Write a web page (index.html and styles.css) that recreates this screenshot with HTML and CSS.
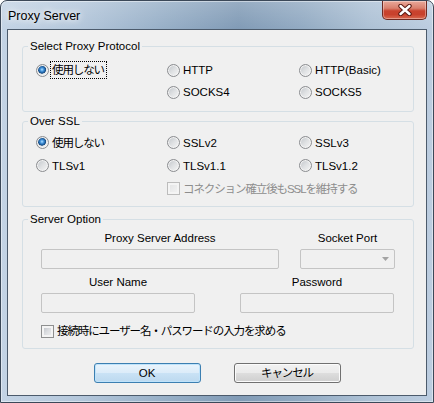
FILE: index.html
```html
<!DOCTYPE html>
<html lang="ja">
<head>
<meta charset="utf-8">
<title>Proxy Server</title>
<link rel="stylesheet" href="styles.css">
</head>
<body>
<div class="window">
  <div class="titlebar">
    <span class="title">Proxy Server</span>
    <button class="close" type="button" aria-label="Close">
      <svg width="14" height="12" viewBox="0 0 14 12">
        <path d="M2.5 2 L11.5 10 M11.5 2 L2.5 10" stroke="#5a1a12" stroke-width="4.4" stroke-linecap="round" fill="none"/>
        <path d="M2.5 2 L11.5 10 M11.5 2 L2.5 10" stroke="#ffffff" stroke-width="2.4" stroke-linecap="round" fill="none"/>
      </svg>
    </button>
  </div>
  <div class="client">
    <fieldset class="group g1">
      <legend>Select Proxy Protocol</legend>
      <div class="opts rows22">
        <label class="opt"><span class="radio checked"></span><span class="focus ja">使用しない</span></label>
        <label class="opt"><span class="radio"></span><span>HTTP</span></label>
        <label class="opt"><span class="radio"></span><span>HTTP(Basic)</span></label>
        <span></span>
        <label class="opt"><span class="radio"></span><span>SOCKS4</span></label>
        <label class="opt"><span class="radio"></span><span>SOCKS5</span></label>
      </div>
    </fieldset>

    <fieldset class="group g2">
      <legend>Over SSL</legend>
      <div class="opts rows23">
        <label class="opt"><span class="radio checked"></span><span class="ja">使用しない</span></label>
        <label class="opt"><span class="radio"></span><span>SSLv2</span></label>
        <label class="opt"><span class="radio"></span><span>SSLv3</span></label>
        <label class="opt"><span class="radio"></span><span>TLSv1</span></label>
        <label class="opt"><span class="radio"></span><span>TLSv1.1</span></label>
        <label class="opt"><span class="radio"></span><span>TLSv1.2</span></label>
        <span></span>
        <label class="opt wide disabled"><span class="check off"></span><span class="ja">コネクション確立後もSSLを維持する</span></label>
      </div>
    </fieldset>

    <fieldset class="group g3">
      <legend>Server Option</legend>
      <div class="server">
        <div class="frow frow1">
          <div class="field w-addr">
            <span class="flabel">Proxy Server Address</span>
            <input class="tbox" type="text" disabled>
          </div>
          <div class="field w-port">
            <span class="flabel">Socket Port</span>
            <div class="combo">
              <svg class="arrow" width="7" height="4" viewBox="0 0 7 4"><path d="M0 0 H7 L3.5 4 Z" fill="#a3a3a3"/></svg>
            </div>
          </div>
        </div>
        <div class="frow frow2">
          <div class="field w-half">
            <span class="flabel">User Name</span>
            <input class="tbox" type="text" disabled>
          </div>
          <div class="field w-half">
            <span class="flabel">Password</span>
            <input class="tbox" type="password" disabled>
          </div>
        </div>
        <label class="opt askrow"><span class="check"></span><span class="ja">接続時にユーザー名・パスワードの入力を求める</span></label>
      </div>
    </fieldset>

    <div class="buttons">
      <button class="btn default" type="button">OK</button>
      <button class="btn ja" type="button">キャンセル</button>
    </div>
  </div>
</div>
</body>
</html>
```

FILE: styles.css
```css
html, body {
  margin: 0;
  padding: 0;
  background: #ffffff;
}

body {
  font-family: "Liberation Sans", "Noto Sans CJK JP", sans-serif;
  font-size: 11.5px;
  color: #000;
}

.ja {
  letter-spacing: -1.1px;
}

.window {
  width: 434px;
  height: 403px;
  box-sizing: border-box;
  border: 1px solid #3b4858;
  border-radius: 7px 7px 0 0;
  padding: 0 6px 6px 6px;
  display: flex;
  flex-direction: column;
  background:
    linear-gradient(180deg, rgba(255,255,255,0.18) 0, rgba(255,255,255,0) 28px),
    linear-gradient(90deg, #c4d4e5 0%, #b4c7db 18%, #97afc7 38%, #819bb6 55%, #93abc3 70%, #adc1d5 85%, #bccde0 100%);
  box-shadow: inset 0 0 0 1px rgba(255,255,255,0.45);
}

.titlebar {
  height: 28px;
  display: flex;
  justify-content: space-between;
  align-items: flex-start;
  padding: 0 0 0 1px;
}

.title {
  margin-top: 7px;
  font-size: 12.5px;
  line-height: 16px;
  color: #000;
  text-shadow: 0 0 6px #fff, 0 0 10px rgba(255,255,255,0.9);
}

.close {
  width: 45px;
  height: 19px;
  margin: 0;
  padding: 0;
  border: 1px solid #6e2a22;
  border-top: none;
  border-radius: 0 0 5px 5px;
  background: linear-gradient(180deg, #e9a99a 0%, #d9806d 40%, #c9432e 55%, #c8412c 75%, #d96a50 100%);
  box-shadow: inset 0 0 0 1px rgba(255,255,255,0.35);
  display: flex;
  align-items: center;
  justify-content: center;
}

.client {
  flex: 1;
  border: 1px solid #4c5b6c;
  background: #f0f0f0;
  padding: 9px 12px 0 14px;
  display: flex;
  flex-direction: column;
}

.group {
  margin: 0;
  padding: 0;
  border: 1px solid #d5dfe5;
  border-radius: 3px;
  min-width: 0;
}

.group legend {
  margin-left: 5px;
  padding: 0 2px;
  line-height: 14px;
  color: #000;
}

.g2 { margin-top: 2px; }
.g3 { margin-top: 5px; }

.opts {
  display: grid;
  grid-template-columns: 131px 132px auto;
  align-items: center;
  padding-left: 13px;
}

.rows22 {
  grid-auto-rows: 22px;
  padding-top: 6px;
  padding-bottom: 8px;
}

.rows23 {
  grid-auto-rows: 23px;
  padding-top: 3px;
  padding-bottom: 6px;
}

.opt {
  display: flex;
  align-items: center;
  gap: 3px;
  line-height: 14px;
  white-space: nowrap;
}

.wide {
  grid-column: span 2;
}

.disabled {
  color: #8d8d8d;
}

.focus {
  outline: 1px dotted #000;
  outline-offset: 0;
  padding: 1px 2px 1px 1px;
  margin-left: -1px;
}

.radio {
  flex: none;
  width: 13px;
  height: 13px;
  box-sizing: border-box;
  border-radius: 50%;
  border: 1px solid #8b8d90;
  background: linear-gradient(135deg, #c0c4c9 0%, #dfe1e3 50%, #f6f6f6 100%);
  box-shadow: inset 0 0 0 1px #f3f3f3;
}

.radio.checked {
  background:
    radial-gradient(circle at 5px 4.6px, #b6e2ff 0, #4a9ae0 1.6px, #1d5d9e 3.2px, #1a4c80 3.8px, rgba(26,76,128,0) 4.3px),
    linear-gradient(135deg, #c0c4c9 0%, #dfe1e3 50%, #f6f6f6 100%);
}

.check {
  flex: none;
  width: 13px;
  height: 13px;
  box-sizing: border-box;
  border: 1px solid #8e8f8f;
  background: linear-gradient(135deg, #b8bcc2 0%, #dcdee1 50%, #f4f4f4 100%);
  box-shadow: inset 0 0 0 2px #f4f4f4;
}

.check.off {
  border-color: #bcbcbc;
  background: linear-gradient(135deg, #e2e3e4 0%, #f4f4f4 100%);
}

.server {
  padding: 5px 0 10px 18px;
  display: flex;
  flex-direction: column;
}

.frow {
  display: flex;
}

.frow1 { gap: 21px; }
.frow2 { gap: 45px; margin-top: 6px; }

.field {
  display: flex;
  flex-direction: column;
  align-items: center;
  gap: 4px;
}

.w-addr { width: 238px; }
.w-port { width: 95px; }
.w-half { width: 154px; }

.flabel {
  line-height: 14px;
}

.tbox {
  display: block;
  width: 100%;
  height: 20px;
  box-sizing: border-box;
  margin: 0;
  padding: 0;
  border: 1px solid #c4c4c4;
  border-radius: 2px;
  background: #f0f0f0;
  font: inherit;
}

.combo {
  width: 100%;
  height: 20px;
  box-sizing: border-box;
  border: 1px solid #c4c4c4;
  border-radius: 2px;
  background: #f0f0f0;
  display: flex;
  justify-content: flex-end;
  align-items: center;
  padding-right: 5px;
}

.askrow {
  margin-top: 11px;
}

.buttons {
  display: flex;
  justify-content: center;
  gap: 33px;
  margin-top: 14px;
  padding-right: 2px;
}

.btn {
  width: 107px;
  height: 20px;
  margin: 0;
  padding: 0;
  box-sizing: border-box;
  border: 1px solid #707070;
  border-radius: 3px;
  background: linear-gradient(180deg, #f2f2f2 0%, #ebebeb 48%, #dddddd 52%, #cfcfcf 100%);
  box-shadow: inset 0 0 0 1px #fbfbfb;
  font-family: "Liberation Sans", "Noto Sans CJK JP", sans-serif;
  font-size: 11.5px;
  line-height: 16px;
  color: #000;
}

.btn.default {
  border-color: #3c7fb1;
  background: linear-gradient(180deg, #eaf4fc 0%, #dcecf9 48%, #c9e2f5 52%, #bcd9ef 100%);
  box-shadow: inset 0 0 0 1px #bfe3fb;
}
```
